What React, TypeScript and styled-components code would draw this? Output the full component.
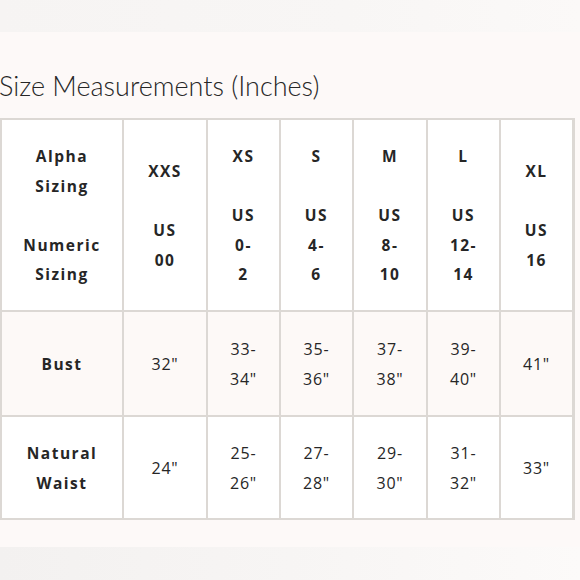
import React from "react";
import styled, { createGlobalStyle } from "styled-components";

const Global = createGlobalStyle`
  html, body { margin: 0; padding: 0; background: #fdf9f8; }
  body { font-family: "Open Sans", "Liberation Sans", sans-serif; color: #2a2a2a; }
`;

const Page = styled.div`
  width: 580px;
  height: 580px;
  display: flex;
  flex-direction: column;
  overflow: hidden;
  background: #fdf9f8;
`;

const TopBand = styled.div`
  height: 32px;
  background: linear-gradient(90deg, #f6f4f3 0%, #f8f6f5 60%, #fbf9f8 100%);
`;

const Title = styled.h1`
  margin: 38px 0 0 -1px;
  font-family: "Lato", "Liberation Sans", sans-serif;
  font-weight: 300;
  font-size: 27px;
  line-height: 32px;
  color: #262626;
`;

const Grid = styled.div`
  margin-top: 16px;
  width: 575px;
  display: grid;
  grid-template-columns: 120px 82px 71px 71px 72px 71px 71px;
  grid-template-rows: 190px 103px 101px;
  gap: 2px;
  padding: 2px;
  box-sizing: border-box;
  background: #dcd8d4;
`;

const Cell = styled.div<{ $shade?: boolean; $head?: boolean }>`
  background: ${(p) => (p.$shade ? "#fdf9f7" : "#ffffff")};
  display: flex;
  align-items: center;
  justify-content: center;
  text-align: center;
  padding-top: 2px;
  font-size: ${(p) => (p.$head ? "15.5px" : "16px")};
  line-height: 29.5px;
  font-weight: ${(p) => (p.$head ? 700 : 400)};
  letter-spacing: ${(p) => (p.$head ? "1.5px" : "0.8px")};
  color: #262626;
`;

const BottomBand = styled.div`
  margin-top: 27px;
  flex: 1;
  background: linear-gradient(90deg, #f3f1f0 0%, #f7f5f4 50%, #fcfaf9 100%);
`;

const lines = (s: string) =>
  s.split("\n").map((l, i, arr) => (
    <React.Fragment key={i}>
      {l === "" ? "\u00a0" : l}
      {i < arr.length - 1 && <br />}
    </React.Fragment>
  ));

const header = [
  "Alpha\nSizing\n\nNumeric\nSizing",
  "XXS\n\nUS\n00",
  "XS\n\nUS\n0-\n2",
  "S\n\nUS\n4-\n6",
  "M\n\nUS\n8-\n10",
  "L\n\nUS\n12-\n14",
  "XL\n\nUS\n16",
];

const bust = ["Bust", '32"', '33-\n34"', '35-\n36"', '37-\n38"', '39-\n40"', '41"'];
const waist = ["Natural\nWaist", '24"', '25-\n26"', '27-\n28"', '29-\n30"', '31-\n32"', '33"'];

export default function App() {
  return (
    <Page>
      <Global />
      <TopBand />
      <Title>Size Measurements (Inches)</Title>
      <Grid>
        {header.map((h, i) => (
          <Cell key={"h" + i} $head>
            <div>{lines(h)}</div>
          </Cell>
        ))}
        {bust.map((h, i) => (
          <Cell key={"b" + i} $shade $head={i === 0}>
            <div>{lines(h)}</div>
          </Cell>
        ))}
        {waist.map((h, i) => (
          <Cell key={"w" + i} $head={i === 0}>
            <div>{lines(h)}</div>
          </Cell>
        ))}
      </Grid>
      <BottomBand />
    </Page>
  );
}
